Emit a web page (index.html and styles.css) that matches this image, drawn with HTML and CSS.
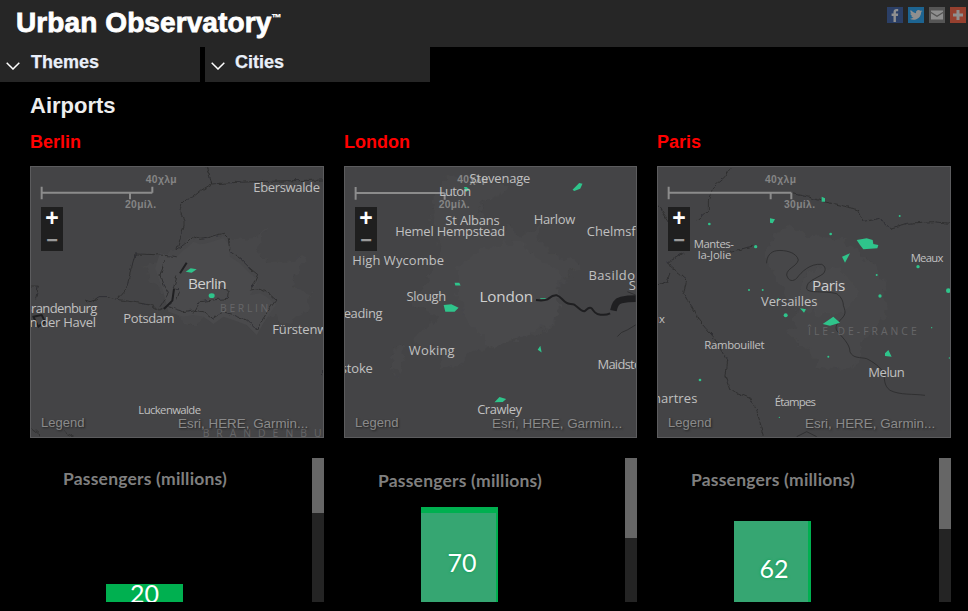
FILE: index.html
```html
<!DOCTYPE html>
<html lang="en">
<head>
<meta charset="utf-8">
<title>Urban Observatory</title>
<link rel="stylesheet" href="styles.css">
</head>
<body>
<header class="topbar">
  <h1 class="logo">Urban Observatory<sup class="tm">™</sup></h1>
  <div class="social">
    <a class="social-btn fb"><svg viewBox="0 0 16 16"><path d="M6.500 15V9H4.600V6.600h1.900V5c0-2 1.200-3 3-3 .8 0 1.500.1 1.700.1v2.100h-1.200c-.9 0-1.100.5-1.100 1.100v1.300h2.300L10.900 9h-2v6z"/></svg></a>
    <a class="social-btn tw"><svg viewBox="0 0 16 16"><path d="M14.500 4.200c-.5.2-1 .4-1.500.4.500-.3.900-.8 1.100-1.400-.5.300-1.100.5-1.700.6a2.600 2.600 0 0 0-4.400 2.400C5.900 5.700 4 4.700 2.700 3.100c-.7 1.200-.3 2.700.8 3.400-.4 0-.8-.1-1.200-.3 0 1.200.9 2.300 2.100 2.600-.4.1-.8.1-1.200 0 .3 1 1.300 1.800 2.400 1.800-1.100.9-2.500 1.300-3.900 1.100 4.900 3 11.400-.3 11.400-6.400 0 0 .8-.5 1.400-1.100z"/></svg></a>
    <a class="social-btn ml"><svg viewBox="0 0 16 16"><path d="M2 3.500h12v1.300L8 8.600 2 4.800zM2 6.200l6 3.800 6-3.800v6.300H2z"/></svg></a>
    <a class="social-btn pl"><svg viewBox="0 0 16 16"><path d="M6.500 3h3v3.500H13v3H9.500V13h-3V9.500H3v-3h3.500z"/></svg></a>
  </div>
</header>

<nav class="menu">
  <div class="menu-item menu-themes">
    <svg class="chevron" viewBox="0 0 14 8"><path d="M.7.700 7 7 13.300.7"/></svg>
    <span>Themes</span>
  </div>
  <div class="menu-item menu-cities">
    <svg class="chevron" viewBox="0 0 14 8"><path d="M.7.700 7 7 13.300.7"/></svg>
    <span>Cities</span>
  </div>
</nav>

<main class="content">
  <h2 class="page-title">Airports</h2>
  <div class="columns">

    <section class="city">
      <h3 class="city-name">Berlin</h3>
      <div class="map">
        <svg class="map-svg" viewBox="30 18 882 816">
          <defs>
            <filter id="rough-area" x="-10%" y="-10%" width="120%" height="120%">
              <feTurbulence type="fractalNoise" baseFrequency="0.035" numOctaves="3" seed="4"/>
              <feDisplacementMap in="SourceGraphic" scale="45" xChannelSelector="R" yChannelSelector="G"/>
            </filter>
            <filter id="rough-line" x="-5%" y="-5%" width="110%" height="110%">
              <feTurbulence type="fractalNoise" baseFrequency="0.05" numOctaves="2" seed="9"/>
              <feDisplacementMap in="SourceGraphic" scale="14" xChannelSelector="R" yChannelSelector="G"/>
            </filter>
          </defs>
          <path class="area" filter="url(#rough-area)" d="M370 320l30-10 30-20 40-20 40-30 40-5 60-5 40 5 30 5 40-15 20-15-20 40-10 25 40 30 50 0 40-20 20 10-30 50-20 40 70 20-20 50-60 40-60-40-100 10-60-10-60 40-50-30-30-40z"/>
          <path class="area-2" d="M470 290l20-20 10-5 20-20 20 8 20-3 25-8 25-7 15 15 5 40 30 20 30 30 25 20-10 25-15 20 30-5 20 10 28 25-18 25-20 30-20 35-15-15-15-15-40-15-30-10-30 22-15-12-15-10-30-5-30 5-25-8-20-7-15-60-25-70 15-45z"/>
          <path class="line" filter="url(#rough-line)" d="M558 20l10 25 7 27 60-4 65-3 210-5M575 72l-30 18-25 20-20 8-15 15-5 17 12 30 0 20-22 70 20-15 10-5 20-20 20 8 20-3 25-8 25-7 15 15 5 40 30 20 30 30 25 20-10 25-15 20 30-5 20 10 28 25-18 25-20 30-20 35-15-15-15-15-40-15-30-10-30 22-15-12-15-10-30-5-30 5-25-8-20-7M470 290l-60-6-65-2-10 40-10 38-5 25-30 33-25-8-25 0-15 10-15 5-15-5M290 418l50 8 50 9 30 15 35-20M435 300l-15 45 10 30 15 25-25 40M470 350l-10 35 20 5-10 30M520 460l20-35 40-5 45-5 3-20-20-10-18-10M30 378h25l-8 40M908 630v15M30 800l30 25M130 815l30 15"/>
          <path class="water" d="M480 340l20-32M432 447l25-25 5-35M40 470l25-5 10 20-20 15z"/>
          <path class="airport" d="M497 335l15-10 18 3-15 10z"/>
          <ellipse class="airport" cx="575" cy="407" rx="9" ry="7"/>
          <g class="scale">
            <path d="M65 80v38M65 98h332M330 98v20M397 80v18"/>
            <text x="377" y="70" textLength="93">40χλμ</text>
            <text x="315" y="145" textLength="93">20μίλ.</text>
          </g>
          <text class="place" x="700" y="96" textLength="200">Eberswalde</text>
          <text class="place big" x="504" y="387" textLength="116">Berlin</text>
          <text class="region" x="600" y="455" textLength="145">BERLIN</text>
          <text class="place" x="10" y="460" textLength="222">Brandenburg</text>
          <text class="place" x="8" y="500" textLength="220">an der Havel</text>
          <text class="place" x="310" y="488" textLength="154">Potsdam</text>
          <text class="place" x="757" y="522" textLength="240">Fürstenwalde</text>
          <text class="place small" x="355" y="762" textLength="188">Luckenwalde</text>
          <text class="region" x="548" y="830" textLength="440">BRANDENBURG</text>
        </svg>
        <div class="zoom"><span class="zoom-in">+</span><span class="zoom-out">−</span></div>
        <span class="legend">Legend</span>
        <span class="attribution">Esri, HERE, Garmin...</span>
      </div>
      <div class="chart">
        <div class="plot">
          <div class="chart-title title-a">Passengers (millions)</div>
          <div class="bar bar-a bar-plain" style="height:18px"><span class="bar-value value-a">20</span></div>
        </div>
        <div class="track"><div class="thumb" style="height:55px"></div></div>
      </div>
    </section>

    <section class="city">
      <h3 class="city-name">London</h3>
      <div class="map">
        <svg class="map-svg" viewBox="27 18 882 816">
          <path class="area" filter="url(#rough-area)" d="M330 60l40-15 60 20 70-10 30 30-60 30-50 40 40 30 110 40 50-30-5 50 50 40 70 20-40 60-60 30 30 90-60 50-70-30-50 50-70 20-40 40-60 10 10-50-40-10-50-10 40-60 30-20-70-50 40-50 20-60 30-40-20-60-20-50z"/>
          <path class="area-2" filter="url(#rough-area)" d="M370 320l60-50 70-10 50-20 30 30 60 40 40 40-10 50 10 60-40 40-50 20-60 30-60 10-40-40-40-50-20-60z"/>
          <path class="area" filter="url(#rough-area)" d="M175 570l30-15 5 50-15 40-25-10z"/>
          <path class="water" d="M605 420c15 2 25 2 35-2 10-8 15-14 28-12 12 4 18 16 28 22 8 6 16 2 24 6 10 6 20 20 30 20 6-2 12-14 20-10 8 4 8 14 20 18 14 4 30 2 38-2"/>
          <path class="water-wide" d="M838 452c4-18 8-28 24-32 14-3 30-4 43-4"/>
          <path class="line" d="M850 530l12-12 18-8 25-15M880 395l25 10"/>
          <path class="airport" d="M715 88l20-20 10 2-7 15-18 7zM360 368h14l4 8h-16zM327 435l23-2 22 10-12 12h-28zM618 414h16v2h-16zM610 570l8-12 4 20zM480 728l15-16 20 6-10 9zM388 80h8l10 8-12 6z"/>
          <g class="scale">
            <path d="M62 80v38M62 98h268M330 98v20"/>
            <text x="368" y="68" textLength="93">40χλμ</text>
            <text x="312" y="143" textLength="93">20μίλ.</text>
          </g>
          <text class="place" x="405" y="68" textLength="183">Stevenage</text>
          <text class="place" x="313" y="106" textLength="97">Luton</text>
          <text class="place" x="332" y="194" textLength="164">St Albans</text>
          <text class="place" x="598" y="191" textLength="125">Harlow</text>
          <text class="place" x="758" y="228" textLength="210">Chelmsford</text>
          <text class="place" x="181" y="227" textLength="331">Hemel Hempstead</text>
          <text class="place" x="52" y="314" textLength="276">High Wycombe</text>
          <text class="place" x="763" y="360" textLength="165">Basildon</text>
          <text class="place" x="884" y="390" textLength="180">Southend</text>
          <text class="place" x="215" y="424" textLength="120">Slough</text>
          <text class="place big" x="435" y="427" textLength="161">London</text>
          <text class="place" x="3" y="473" textLength="140">Reading</text>
          <text class="place" x="222" y="587" textLength="138">Woking</text>
          <text class="place" x="-100" y="641" textLength="214">Basingstoke</text>
          <text class="place" x="790" y="629" textLength="175">Maidstone</text>
          <text class="place" x="428" y="763" textLength="135">Crawley</text>
        </svg>
        <div class="zoom"><span class="zoom-in">+</span><span class="zoom-out">−</span></div>
        <span class="legend">Legend</span>
        <span class="attribution">Esri, HERE, Garmin...</span>
      </div>
      <div class="chart">
        <div class="plot">
          <div class="chart-title title-b">Passengers (millions)</div>
          <div class="bar bar-b bar-top" style="height:95px"><span class="bar-value value-b">70</span></div>
        </div>
        <div class="track"><div class="thumb" style="height:80px"></div></div>
      </div>
    </section>

    <section class="city">
      <h3 class="city-name">Paris</h3>
      <div class="map">
        <svg class="map-svg" viewBox="21 18 882 816">
          <path class="area" filter="url(#rough-area)" d="M370 220l60-20 60 30 80 10 60 40 50 40 20 70 10 60-40 60-40 50 0 50-60 20-70-10-20-50-70-50 20-30 10-50-40-40-30-60-20-60z"/>
          <path class="area-2" filter="url(#rough-area)" d="M470 340l50-20 50 10 40 40 10 40-30 40-60 20-60-20-30-50z"/>
          <path class="line" filter="url(#rough-line)" d="M420 100l50 10 50 15 50 10 55 15 15 35 50-10 30 30 50-15 80-5 50 5M240 25l-15 25-35 30-15 40v30l-35 30M21 130l39 60 15 30M100 280l-50 30 25 20 35 30-10 40 30 50 15 30 45 50 40 70-5 50 15 40 60 25 20 35 20 80M21 375l30-10 10-30M240 275l70-17"/>
          <path class="line" d="M350 310c0-20 10-35 30-38 25-3 60 5 65 28-5 20-35 25-35 45 5 20 20 20 30 10 15-20 40-45 75-42 10 5 15 15 5 28-25 18-50 20-50 45 5 15 50 5 90 15 15 10 20 25 20 35 5 15 10 25-5 40-15 15-20 25-15 35 15 20 40 40 40 65 10 20 30 15 50 20 20 10 40 25 50 40 5 20 0 40 20 55 30 15 70 10 105 15M500 830l-30-15-30 15"/>
          <path class="airport" d="M620 240l30-5 18 5 2 12 15 3-3 10-42 3-10-13zM576 290l24-10-15 28zM518 492l32-22 20 18-30 9zM705 580l10-10 10 20-20-2zM360 175l15 3-7 12-8-2zM515 110l10 5v10h-10zM450 445l18 3-6 10z"/>
          <g class="airport">
            <circle cx="178" cy="192" r="4"/><circle cx="542" cy="222" r="4"/><circle cx="804" cy="320" r="5"/><circle cx="895" cy="392" r="7"/><circle cx="690" cy="408" r="5"/><circle cx="407" cy="466" r="6"/><circle cx="338" cy="390" r="3"/><circle cx="150" cy="660" r="4"/><circle cx="680" cy="345" r="3"/><circle cx="749" cy="168" r="3"/><circle cx="297" cy="390" r="3"/><circle cx="317" cy="260" r="5"/><circle cx="845" cy="503" r="2"/><circle cx="898" cy="594" r="2"/><circle cx="385" cy="418" r="3"/><circle cx="535" cy="590" r="3"/><circle cx="388" cy="772" r="2"/>
          </g>
          <g class="scale">
            <path d="M56 80v38M56 98h368M362 98v20M424 98v20"/>
            <text x="345" y="70" textLength="93">40χλμ</text>
            <text x="402" y="145" textLength="93">30μίλ.</text>
          </g>
          <text class="place small" x="131" y="263" textLength="121">Mantes-</text>
          <text class="place small" x="143" y="296" textLength="101">la-Jolie</text>
          <text class="place small" x="782" y="305" textLength="98">Meaux</text>
          <text class="place big" x="486" y="394" textLength="100">Paris</text>
          <text class="place" x="333" y="437" textLength="169">Versailles</text>
          <text class="region" x="474" y="525" textLength="326">ÎLE-DE-FRANCE</text>
          <text class="place small" x="-52" y="490" textLength="97">Dreux</text>
          <text class="place small" x="163" y="566" textLength="181">Rambouillet</text>
          <text class="place" x="655" y="652" textLength="109">Melun</text>
          <text class="place" x="-16" y="730" textLength="158">Chartres</text>
          <text class="place small" x="374" y="738" textLength="124">Étampes</text>
        </svg>
        <div class="zoom"><span class="zoom-in">+</span><span class="zoom-out">−</span></div>
        <span class="legend">Legend</span>
        <span class="attribution">Esri, HERE, Garmin...</span>
      </div>
      <div class="chart">
        <div class="plot">
          <div class="chart-title title-c">Passengers (millions)</div>
          <div class="bar bar-b bar-side" style="height:81px"><span class="bar-value value-c">62</span></div>
        </div>
        <div class="track"><div class="thumb" style="height:71px"></div></div>
      </div>
    </section>

  </div>
</main>
</body>
</html>
```

FILE: styles.css
```css
* { box-sizing: border-box; }

html, body {
  margin: 0;
  height: 100%;
  overflow: hidden;
  background: #000;
  font-family: "Liberation Sans", Arial, sans-serif;
}

.topbar {
  height: 47px;
  background: #262626;
  display: flex;
  justify-content: space-between;
  padding: 7px 2px 0 16px;
}

.logo {
  margin: 0;
  font-size: 28px;
  line-height: 32px;
  font-weight: 700;
  letter-spacing: 0.1px;
  color: #fff;
  -webkit-text-stroke: 0.8px #fff;
}

.tm {
  font-size: 10px;
  line-height: 0;
  letter-spacing: 0;
  vertical-align: 11px;
  -webkit-text-stroke: 0.3px #fff;
}

.social { display: flex; gap: 5px; }

.social-btn {
  width: 16px;
  height: 16px;
  display: block;
}
.social-btn svg { display: block; width: 16px; height: 16px; fill: #8f8f8f; }
.fb { background: #2b3f66; }
.tw { background: #1d6491; }
.ml { background: #555; }
.pl { background: #96402f; }

.menu { display: flex; gap: 5px; height: 35px; }

.menu-item {
  background: #262626;
  color: #e9eff9;
  font-size: 18px;
  font-weight: 700;
  -webkit-text-stroke: 0.25px #e9eff9;
  display: flex;
  align-items: center;
  padding-bottom: 4px;
}
.menu-themes { width: 200px; padding-left: 6px; gap: 11px; }
.menu-cities { width: 225px; padding-left: 6px; gap: 10px; }

.chevron {
  width: 14px;
  height: 8px;
  margin-top: 7px;
  fill: none;
  stroke: #fff;
  stroke-width: 1.5;
}

.content { padding-left: 30px; }

.page-title {
  margin: 0;
  padding-top: 11px;
  font-size: 22px;
  line-height: 26px;
  font-weight: 700;
  color: #eee;
}

.columns {
  display: grid;
  grid-template-columns: 294px 293px 294px;
  column-gap: 20px;
}

.city-name {
  margin: 12px 0 0;
  height: 23px;
  font-size: 18px;
  line-height: 23px;
  font-weight: 700;
  color: #f00;
}

.map {
  position: relative;
  width: 100%;
  height: 272px;
  margin-top: 12px;
  background: #444446;
  outline: 1px solid #5c5c5e;
  outline-offset: -1px;
  overflow: hidden;
}

.map-svg { display: block; width: 100%; height: 100%; }

.area { fill: #474749; }
.area-2 { fill: #4a4a4c; }
.line { fill: none; stroke: #2b2b2d; stroke-width: 2.500; stroke-linejoin: round; }
.water { fill: none; stroke: #1f1f21; stroke-width: 6; stroke-linejoin: round; }
.water-wide { fill: none; stroke: #1f1f21; stroke-width: 20; }
.airport { fill: #2fc48b; }

.scale path { fill: none; stroke: #8c8c8c; stroke-width: 6; }
.scale text {
  font-family: "Liberation Sans", Arial, sans-serif;
  font-size: 31px;
  font-weight: 700;
  fill: #858585;
}

.place {
  font-family: "Open Sans", sans-serif;
  font-size: 39px;
  fill: #c0c0c0;
}
.place.big { font-size: 46px; fill: #cfcfcf; }
.place.small { font-size: 34px; }
.region {
  font-family: "Open Sans", sans-serif;
  font-size: 31px;
  fill: #666668;
}

.zoom {
  position: absolute;
  left: 11px;
  top: 41px;
  width: 22px;
  height: 44px;
  background: #1f1f1f;
  display: flex;
  flex-direction: column;
  align-items: center;
  font-family: "Liberation Sans", Arial, sans-serif;
  font-weight: 700;
}
.zoom span { height: 22px; line-height: 22px; }
.zoom-in { color: #fff; font-size: 23px; }
.zoom-out { color: #9a9a9a; font-size: 20px; }

.legend, .attribution {
  position: absolute;
  color: #8a8a8a;
  line-height: 16px;
  text-shadow: 1px 1px 2px #222;
}
.legend { left: 11px; top: 249px; font-size: 13px; }
.attribution { left: 148px; top: 250px; font-size: 13.400px; white-space: nowrap; }

.chart {
  display: flex;
  height: 144px;
  margin-top: 20px;
}

.plot {
  flex: 1;
  display: flex;
  flex-direction: column;
  justify-content: space-between;
}

.chart-title {
  font-family: Lato, sans-serif;
  font-size: 17.500px;
  font-weight: 700;
  letter-spacing: 0.2px;
  line-height: 20px;
  color: #7f7f7f;
  white-space: nowrap;
}
.title-a { padding: 11px 0 0 33px; }
.title-b { padding: 13px 0 0 34px; }
.title-c { padding: 12px 0 0 34px; }

.bar {
  position: relative;
  width: 77px;
  overflow: hidden;
  color: #fff;
  font-family: Lato, sans-serif;
  font-size: 25px;
  text-align: center;
}
.bar-a { margin-left: 76px; }
.bar-b { margin-left: 77px; }
.bar-plain { background: #00b050; }
.bar-top { background: #36a672; border-top: 6px solid #00b050; border-right: 2px solid #00b050; }
.bar-side { background: #36a672; border-right: 3px solid #00b050; }

.bar-value {
  position: absolute;
  left: 0;
  right: 0;
  line-height: 30px;
}
.value-a { top: -6px; }
.value-b { top: 34px; left: 7px; text-shadow: 0 0 3px #00a050; }
.value-c { top: 32px; left: 6px; text-shadow: 0 0 3px #00a050; }

.track {
  width: 12px;
  height: 144px;
  background: #242424;
}
.thumb { background: #666; }
```
